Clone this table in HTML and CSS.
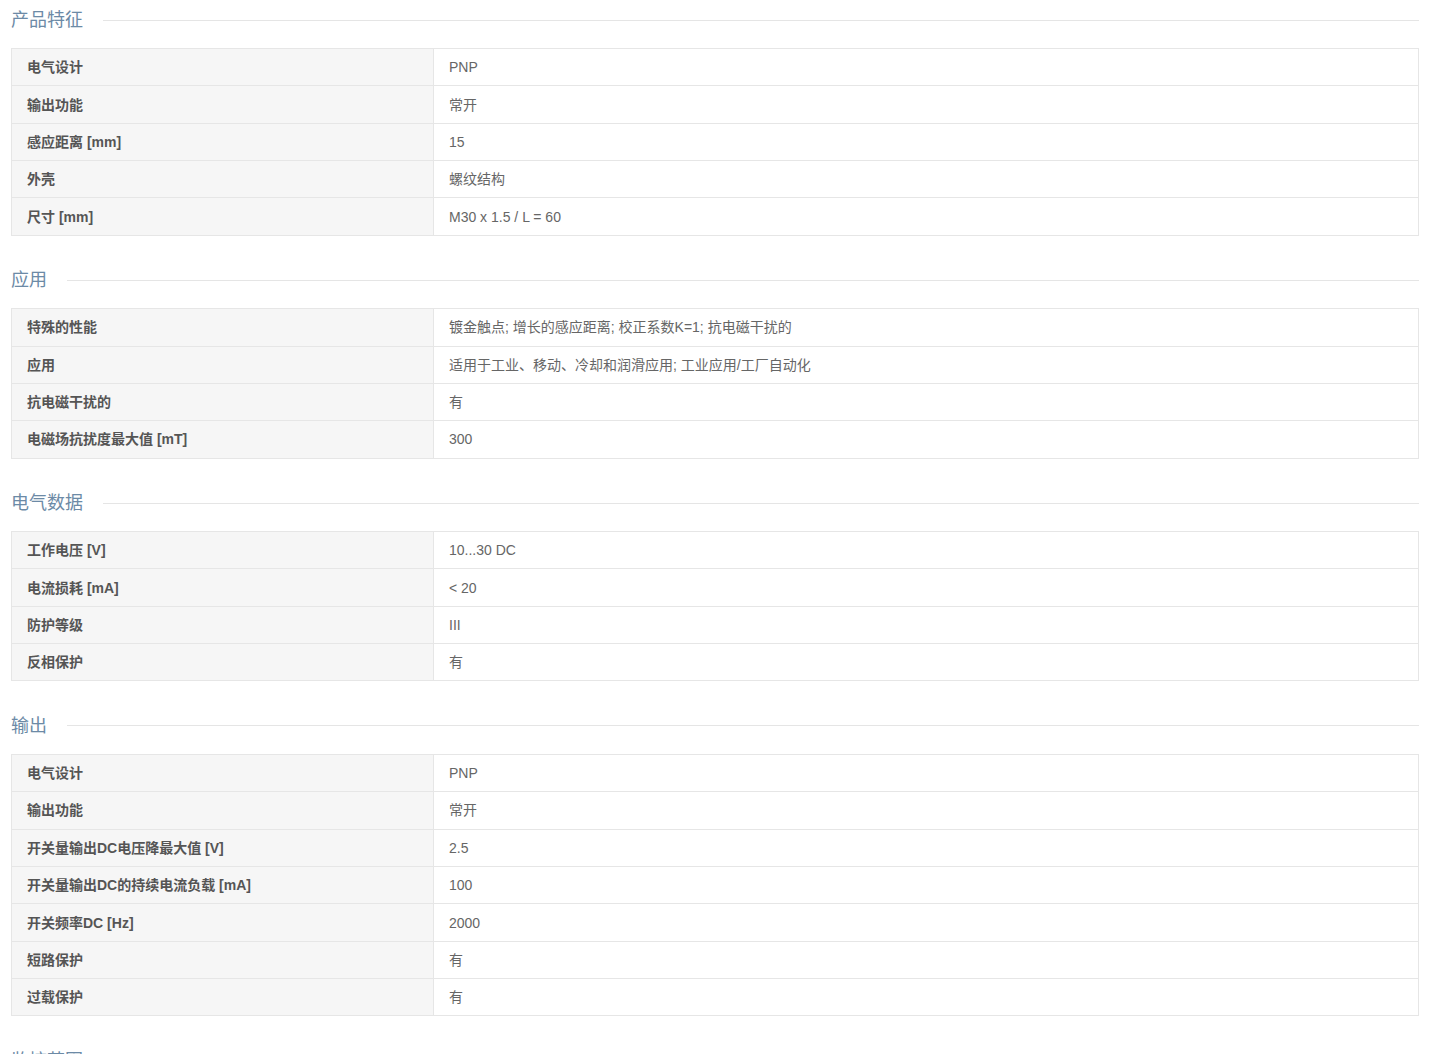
FILE: index.html
```html
<!DOCTYPE html>
<html lang="zh-CN">
<head>
    <meta charset="UTF-8">
    <title>产品参数</title>
    <link rel="stylesheet" href="styles.css">
</head>
<body>
    <div class="specs">
        <div class="section">
            <h3 class="section-title"><span>产品特征</span></h3>
            <table class="spec-table">
                <tr><th>电气设计</th><td>PNP</td></tr>
                <tr><th>输出功能</th><td>常开</td></tr>
                <tr><th>感应距离 [mm]</th><td>15</td></tr>
                <tr><th>外壳</th><td>螺纹结构</td></tr>
                <tr><th>尺寸 [mm]</th><td>M30 x 1.5 / L = 60</td></tr>
            </table>
        </div>

        <div class="section">
            <h3 class="section-title"><span>应用</span></h3>
            <table class="spec-table">
                <tr><th>特殊的性能</th><td>镀金触点; 增长的感应距离; 校正系数K=1; 抗电磁干扰的</td></tr>
                <tr><th>应用</th><td>适用于工业、移动、冷却和润滑应用; 工业应用/工厂自动化</td></tr>
                <tr><th>抗电磁干扰的</th><td>有</td></tr>
                <tr><th>电磁场抗扰度最大值 [mT]</th><td>300</td></tr>
            </table>
        </div>

        <div class="section">
            <h3 class="section-title"><span>电气数据</span></h3>
            <table class="spec-table">
                <tr><th>工作电压 [V]</th><td>10...30 DC</td></tr>
                <tr><th>电流损耗 [mA]</th><td>&lt; 20</td></tr>
                <tr><th>防护等级</th><td>III</td></tr>
                <tr><th>反相保护</th><td>有</td></tr>
            </table>
        </div>

        <div class="section">
            <h3 class="section-title"><span>输出</span></h3>
            <table class="spec-table">
                <tr><th>电气设计</th><td>PNP</td></tr>
                <tr><th>输出功能</th><td>常开</td></tr>
                <tr><th>开关量输出DC电压降最大值 [V]</th><td>2.5</td></tr>
                <tr><th>开关量输出DC的持续电流负载 [mA]</th><td>100</td></tr>
                <tr><th>开关频率DC [Hz]</th><td>2000</td></tr>
                <tr><th>短路保护</th><td>有</td></tr>
                <tr><th>过载保护</th><td>有</td></tr>
            </table>
        </div>

        <div class="section">
            <h3 class="section-title"><span>监控范围</span></h3>
        </div>
    </div>
</body>
</html>
```

FILE: styles.css
```css
body {
    margin: 0;
    padding: 0;
    background: #fff;
    font-family: "Liberation Sans", Arial, "Noto Sans CJK SC", sans-serif;
    color: #666;
}

.specs {
    padding: 8px 15px 0 11px;
}

.section {
    margin-bottom: 32.5px;
}

/* Section heading with trailing rule */
.section-title {
    display: flex;
    align-items: center;
    margin: 0 0 16px 0;
    height: 24px;
    font-size: 18px;
    font-weight: normal;
    line-height: 24px;
    color: #6c8aa6;
}

.section-title::after {
    content: "";
    flex: 1;
    height: 1px;
    background: #e5e5e5;
    margin-left: 20px;
}

/* Spec table */
.spec-table {
    width: 100%;
    border-collapse: collapse;
    border: 1px solid #e6e6e6;
    font-size: 14px;
}

.spec-table tr {
    height: 37.35px;
}

.spec-table th,
.spec-table td {
    border: 1px solid #e6e6e6;
    padding: 0 15px;
    line-height: 16px;
    text-align: left;
    vertical-align: middle;
}

.spec-table th {
    width: 391px;
    background: #f6f6f6;
    color: #555;
    font-weight: bold;
}

.spec-table td {
    background: #fff;
    color: #666;
}
```
